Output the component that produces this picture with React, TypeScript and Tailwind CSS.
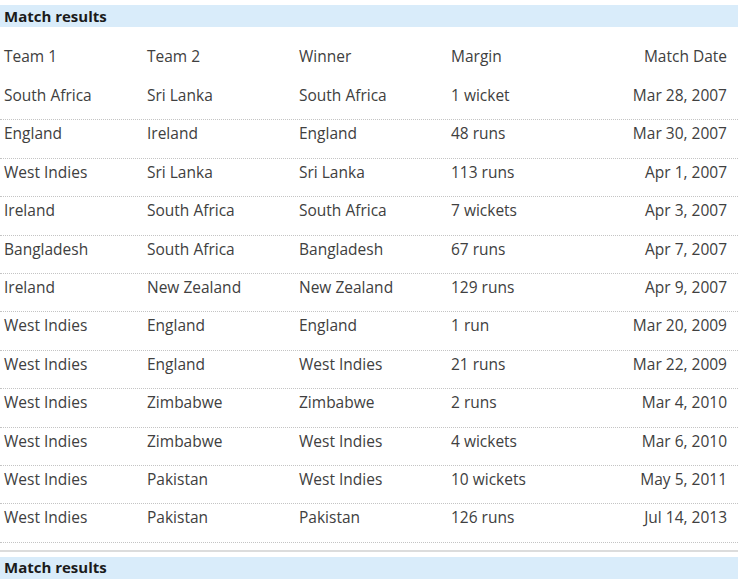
import React from 'react';

const rows = [
  ['South Africa', 'Sri Lanka', 'South Africa', '1 wicket', 'Mar 28, 2007'],
  ['England', 'Ireland', 'England', '48 runs', 'Mar 30, 2007'],
  ['West Indies', 'Sri Lanka', 'Sri Lanka', '113 runs', 'Apr 1, 2007'],
  ['Ireland', 'South Africa', 'South Africa', '7 wickets', 'Apr 3, 2007'],
  ['Bangladesh', 'South Africa', 'Bangladesh', '67 runs', 'Apr 7, 2007'],
  ['Ireland', 'New Zealand', 'New Zealand', '129 runs', 'Apr 9, 2007'],
  ['West Indies', 'England', 'England', '1 run', 'Mar 20, 2009'],
  ['West Indies', 'England', 'West Indies', '21 runs', 'Mar 22, 2009'],
  ['West Indies', 'Zimbabwe', 'Zimbabwe', '2 runs', 'Mar 4, 2010'],
  ['West Indies', 'Zimbabwe', 'West Indies', '4 wickets', 'Mar 6, 2010'],
  ['West Indies', 'Pakistan', 'West Indies', '10 wickets', 'May 5, 2011'],
  ['West Indies', 'Pakistan', 'Pakistan', '126 runs', 'Jul 14, 2013'],
];

const grid = 'grid grid-cols-[143px_152px_152px_1fr_auto] items-center px-[4px] pr-[11px] text-[15.5px]';

function Band() {
  return (
    <div className="h-[22px] bg-[#d9ecfa] flex items-center px-[4px]">
      <span className="text-[15px] font-bold text-[#1b1b1b]">Match results</span>
    </div>
  );
}

export default function App() {
  return (
    <div className="w-[741px] h-[580px] bg-white overflow-hidden text-[#404040] font-['Open_Sans',sans-serif]">
      <div className="w-[738px] pt-[5px]">
        <Band />
        <div className={`${grid} h-[39px] mt-[10px]`}>
          <span>Team 1</span>
          <span>Team 2</span>
          <span>Winner</span>
          <span>Margin</span>
          <span className="text-right">Match Date</span>
        </div>
        <div className="mt-[6px]">
          {rows.map((r, i) => (
            <div key={i} className={`${grid} h-[38.4px] pb-[10px] border-b border-dotted border-[#c4c4c4]`}>
              <span>{r[0]}</span>
              <span>{r[1]}</span>
              <span>{r[2]}</span>
              <span>{r[3]}</span>
              <span className="text-right">{r[4]}</span>
            </div>
          ))}
        </div>
        <div className="mt-[7px] h-[2px] bg-[#dcdcdc]" />
        <div className="mt-[5px]">
          <Band />
        </div>
      </div>
    </div>
  );
}
